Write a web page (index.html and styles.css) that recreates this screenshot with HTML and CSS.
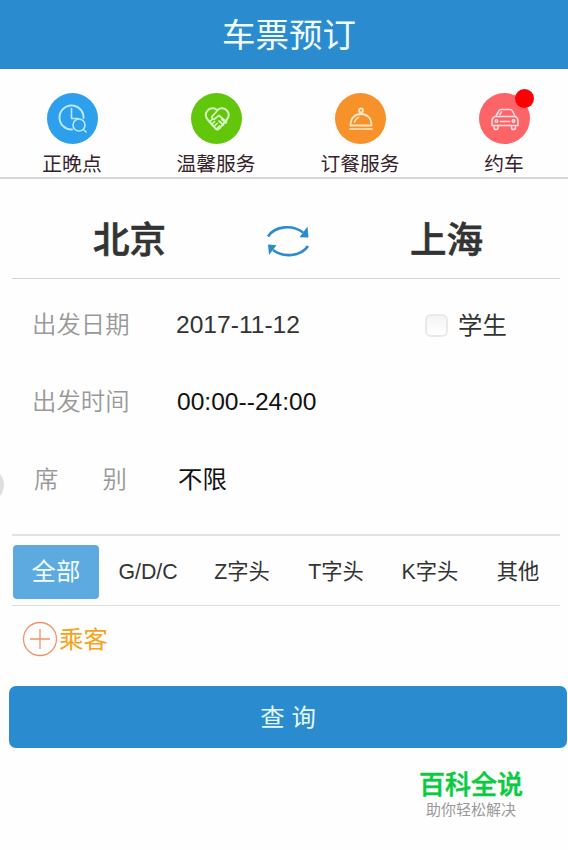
FILE: index.html
```html
<!DOCTYPE html>
<html lang="zh-CN">
<head>
    <meta charset="UTF-8">
    <meta name="viewport" content="width=device-width, initial-scale=1.0">
    <title>车票预订</title>
    <link rel="stylesheet" href="styles.css">
</head>
<body>
    <header class="navbar">车票预订</header>

    <nav class="services">
        <a class="service">
            <span class="service-icon blue">
                <svg width="52" height="52" viewBox="0 0 52 52">
                    <path d="M25 36.5A12 12 0 1 1 36.5 25" stroke-width="2"/>
                    <path d="M24.5 15.5v10h7" stroke-width="1.6"/>
                    <circle cx="32" cy="32" r="6" stroke-width="1.6"/>
                    <path d="M36.5 36.5l2.5 2.5" stroke-width="1.6"/>
                </svg>
            </span>
            <span class="service-name">正晚点</span>
        </a>
        <a class="service">
            <span class="service-icon green">
                <svg width="52" height="52" viewBox="0 0 52 52">
                    <path d="M26 17c-3-2.500-7-2.200-9.500.7-2.500 3-1.800 6.700.5 9.300l7.500 8.500q2 2 4-.2l7-8.300c2.300-2.600 3-6.300.5-9.300-2.500-2.900-6.500-3.200-9.500-.7z" stroke-width="2"/>
                    <path d="M27 17l-6 6.500q-.6 3 2.500 2.500l4.500-3.500 7.500 6.500" stroke-width="1.800"/>
                    <path d="M18.500 29l3-3M20.500 31.500l3-3M23 33.500l3-3M25.500 36l3-3M28 28l4.500 4M31 26.500l4 3.500" stroke-width="1.700"/>
                </svg>
            </span>
            <span class="service-name">温馨服务</span>
        </a>
        <a class="service">
            <span class="service-icon orange">
                <svg width="52" height="52" viewBox="0 0 52 52">
                    <circle cx="26" cy="17.500" r="2" stroke-width="1.800"/>
                    <path d="M15.500 32.500c0-7.500 4.500-11.500 10.500-11.500s10.500 4 10.500 11.500z" stroke-width="1.800"/>
                    <path d="M19.500 29c.7-2.500 2-3.700 4-4.500M15 36h22" stroke-width="1.700"/>
                </svg>
            </span>
            <span class="service-name">订餐服务</span>
        </a>
        <a class="service">
            <span class="service-icon red">
                <svg width="52" height="52" viewBox="0 0 52 52">
                    <path d="M17 23l2.800-5q.7-1.500 2.200-1.500h9q1.800 0 2.500 1.500l2.500 5M21 21.500l1.500-2.500M16 23.500h20q3 1 3 4.500v4.500h-26v-4.500q0-3.500 3-4.500z" stroke-width="1.600"/>
                    <circle cx="17.500" cy="28" r="1.300" stroke-width="1.400"/>
                    <circle cx="34.500" cy="28" r="1.300" stroke-width="1.400"/>
                    <path d="M21.500 28.500h9M15 33v1.700q0 1.800 2 1.800t2-1.800v-1.700M32.500 33v1.700q0 1.800 2 1.800t2-1.800v-1.700" stroke-width="1.500"/>
                </svg>
                <i class="badge"></i>
            </span>
            <span class="service-name">约车</span>
        </a>
    </nav>

    <main class="container">
        <section class="route">
            <span class="city">北京</span>
            <svg class="swap" width="46" height="36" viewBox="0 0 46 36">
                <path d="M3 13.500C10 2.500 28 1.500 38 9.500M43 23C36 33.500 18 35 8 27" fill="none" stroke="#2a8ccf" stroke-width="2.600"/>
                <path d="M42.500 3.500l1 11-9-.3zM3 21.500l8.500.8-7.500 9.700z" fill="#2a8ccf"/>
            </svg>
            <span class="city">上海</span>
        </section>

        <section class="details">
            <div class="row">
                <span class="label">出发日期</span>
                <span class="value date">2017-11-12</span>
                <label class="student"><span class="checkbox"></span><span class="student-text">学生</span></label>
            </div>
            <div class="row">
                <span class="label">出发时间</span>
                <span class="value time">00:00--24:00</span>
            </div>
            <div class="row">
                <span class="label seat"><span>席</span><span>别</span></span>
                <span class="value seat-type">不限</span>
            </div>
            <i class="handle"></i>
        </section>

        <section class="train-types">
            <span class="type active">全部</span>
            <span class="type">G/D/C</span>
            <span class="type">Z字头</span>
            <span class="type">T字头</span>
            <span class="type">K字头</span>
            <span class="type">其他</span>
        </section>

        <div class="passenger">
            <svg width="36" height="36" viewBox="0 0 36 36">
                <circle cx="18" cy="18" r="16.500"/>
                <path d="M8 18h20M18 8v20"/>
            </svg>
            <span class="passenger-text">乘客</span>
        </div>
    </main>

    <button class="btn">查 询</button>

    <footer class="brand">
        <div class="brand-name">百科全说</div>
        <div class="brand-slogan">助你轻松解决</div>
    </footer>
</body>
</html>
```
FILE: styles.css
```css
* {
    box-sizing: border-box;
}
body {
    margin: 0;
    height: 850px;
    overflow: hidden;
    background: #fefefe;
    color: #333;
    font-family: "Liberation Sans", "Noto Sans CJK SC", sans-serif;
}
.navbar {
    height: 69px;
    padding-left: 10px;
    background: #2a8ccf;
    color: #f0fcff;
    font-size: 33.5px;
    line-height: 71px;
    text-align: center;
}
.services {
    display: grid;
    grid-template-columns: repeat(4, 144px);
    height: 110px;
    padding-top: 24px;
    border-bottom: 2px solid #d6d6d6;
    overflow: hidden;
}
.service {
    display: flex;
    flex-direction: column;
    align-items: center;
}
.service-icon {
    position: relative;
    width: 51px;
    height: 51px;
    border-radius: 50%;
}
.service-icon svg {
    display: block;
    fill: none;
    stroke: #fff;
    stroke-linecap: round;
    stroke-linejoin: round;
}
.blue {
    background: #2d9fec;
}
.blue svg {
    stroke: #b5eaff;
}
.green {
    background: #62c60a;
}
.green svg {
    stroke: #d4f8c0;
}
.orange {
    background: #f7922b;
}
.orange svg {
    stroke: #ffe6c0;
}
.red {
    background: #fd6468;
}
.red svg {
    stroke: #ffe0e0;
}
.badge {
    position: absolute;
    top: -4px;
    right: -4px;
    width: 19px;
    height: 19px;
    border-radius: 50%;
    background: #fd0006;
}
.service-name {
    margin-top: 6px;
    color: #35232b;
    font-size: 19.8px;
    line-height: 28px;
}
.container {
    padding: 0 8px 0 12px;
}
.route {
    display: flex;
    justify-content: space-between;
    align-items: center;
    height: 100px;
    padding: 24px 77px 0 81px;
    border-bottom: 1px solid #d4d4d4;
}
.city {
    width: 73px;
    font-size: 36.5px;
    font-weight: 500;
    line-height: 50px;
    white-space: nowrap;
    -webkit-text-stroke: 0.7px #333;
}
.swap {
    margin-right: 1px;
}
.details {
    position: relative;
    height: 257px;
    padding: 7px 0 0 20px;
    border-bottom: 2px solid #e4e2e2;
}
.row {
    display: flex;
    align-items: center;
    height: 77.5px;
    font-size: 24.4px;
}
.label {
    width: 98px;
    margin-right: 46px;
    padding-bottom: 5px;
    color: #999;
    font-weight: 350;
    white-space: nowrap;
}
.seat {
    display: flex;
    justify-content: space-between;
    padding: 0 3px 5px 2px;
}
.value {
    color: #111;
}
.date {
    width: 249px;
    color: #333;
    font-size: 24.6px;
}
.time {
    padding-left: 1px;
    font-size: 24.6px;
}
.seat-type {
    padding: 0 0 5px 2px;
}
.student {
    display: flex;
    align-items: center;
}
.student-text {
    padding-bottom: 3px;
}
.checkbox {
    width: 23px;
    height: 23px;
    margin-top: 2px;
    margin-right: 10px;
    border: 2px solid #e9e9e9;
    border-radius: 6px;
    background: linear-gradient(#f4f4f4, #fff);
}
/* edge of the drawer handle, most of it is off screen */
.handle {
    position: absolute;
    top: 189px;
    left: -44px;
    width: 36px;
    height: 34px;
    border-radius: 17px;
    background: #dedede;
}
.train-types {
    display: grid;
    grid-template-columns: 86px 2px repeat(4, 94px) 82px;
    align-items: center;
    height: 70px;
    padding: 2px 0 0 1px;
    border-bottom: 1px solid #dedede;
    font-size: 21.3px;
}
.type {
    padding-bottom: 4px;
    text-align: center;
    white-space: nowrap;
}
.type:nth-child(2) {
    grid-column: 3;
    padding: 1px 0 0;
}
.active {
    height: 54px;
    padding: 0;
    border-radius: 4px;
    background: #5caae0;
    color: #f0fcff;
    font-size: 24.4px;
    line-height: 54px;
}
.passenger {
    display: flex;
    align-items: center;
    height: 66px;
    padding-left: 10px;
    color: #f5a31c;
    font-size: 24.4px;
}
.passenger svg {
    fill: none;
    stroke: #ef9468;
    stroke-width: 1.3;
}
.passenger-text {
    padding: 0 0 4px 1px;
}
.btn {
    display: block;
    width: 558px;
    height: 62px;
    margin: 14px 0 0 9px;
    padding: 0 6px 3px;
    border: none;
    border-radius: 7px;
    background: #2a8ccf;
    color: #e4f8ff;
    font-family: inherit;
    font-size: 24.4px;
    cursor: pointer;
}
.brand {
    width: 142px;
    margin: 18px 0 0 400px;
    text-align: center;
}
.brand-name {
    color: #0acb3f;
    font-size: 26px;
    font-weight: 500;
    line-height: 38px;
    -webkit-text-stroke: 0.5px #0acb3f;
}
.brand-slogan {
    color: #999;
    font-size: 15px;
    line-height: 12px;
}
```
